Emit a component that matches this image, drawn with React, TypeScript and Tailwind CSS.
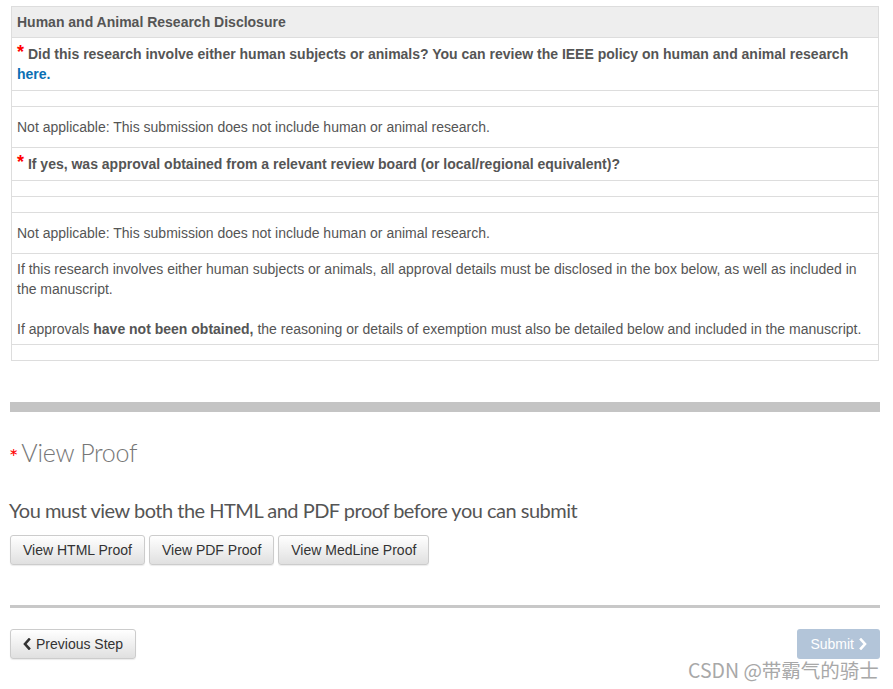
const body = "font-['Liberation_Sans',Arial,sans-serif]";

function Star({ className = '' }: { className?: string }) {
  return <span className={`text-[#ff0000] ${className}`}>*</span>;
}

function Chevron({ dir }: { dir: 'left' | 'right' }) {
  return (
    <svg viewBox="0 0 8 12" className="w-[8px] h-[12px]" fill="none" stroke="currentColor" strokeWidth="2.6" strokeLinecap="square">
      {dir === 'left' ? <polyline points="6,1.5 2,6 6,10.5" /> : <polyline points="2,1.5 6,6 2,10.5" />}
    </svg>
  );
}

function EmptyRow() {
  return <div className="h-[16px] border-t border-[#dddddd]" />;
}

function NotApplicable() {
  return (
    <div className="border-t border-[#dddddd] px-[5px] py-[10px] leading-[20px]">
      Not applicable: This submission does not include human or animal research.
    </div>
  );
}

function GreyButton({ children }: { children: React.ReactNode }) {
  return (
    <button
      className={`${body} h-[30px] px-[12px] rounded-[3px] border border-[#cccccc] bg-gradient-to-b from-[#ffffff] to-[#e0e0e0] text-[14px] text-[#333333] shadow-[0_1px_1px_rgba(0,0,0,0.08)] flex items-center gap-[5px]`}
    >
      {children}
    </button>
  );
}

export default function App() {
  return (
    <div className="relative w-[893px] h-[689px] bg-white overflow-hidden">
      <div className="pt-[6px] pl-[11px] pr-[14px]">
        <div className={`${body} border border-[#dddddd] text-[14px] text-[#555555]`}>
          <div className="h-[30px] bg-[#eeeeee] px-[5px] flex items-center font-bold">
            Human and Animal Research Disclosure
          </div>
          <div className="border-t border-[#dddddd] px-[5px] py-[6px] leading-[20px] font-bold">
            <Star className="text-[18px] leading-[0] relative top-[-1px]" /> Did this research involve either human subjects or animals? You can review the IEEE policy on human and animal research{' '}
            <a className="text-[#0a6fb3]">here.</a>
          </div>
          <EmptyRow />
          <NotApplicable />
          <div className="border-t border-[#dddddd] px-[5px] py-[6px] leading-[20px] font-bold">
            <Star className="text-[18px] leading-[0] relative top-[-1px]" /> If yes, was approval obtained from a relevant review board (or local/regional equivalent)?
          </div>
          <EmptyRow />
          <EmptyRow />
          <NotApplicable />
          <div className="border-t border-[#dddddd] px-[5px] py-[5px] leading-[20px]">
            <p className="mb-[20px]">
              If this research involves either human subjects or animals, all approval details must be disclosed in the box below, as well as included in the manuscript.
            </p>
            <p>
              If approvals <b>have not been obtained,</b> the reasoning or details of exemption must also be detailed below and included in the manuscript.
            </p>
          </div>
          <EmptyRow />
        </div>
      </div>

      <div className="mx-[10px] w-[870px]">
        <div className="mt-[41px] h-[10px] bg-[#c4c4c4]" />

        <div className="mt-[26px] flex items-center h-[30px] font-['Lato',sans-serif]">
          <span className="text-[#ff0000] text-[22px] leading-[22px] mr-[3px] mt-[8px] ml-[-1px]">*</span>
          <span className="text-[25px] font-light text-[#777777] tracking-[-0.3px]">View Proof</span>
        </div>

        <div className="mt-[29px] ml-[-1px] font-['Lato',sans-serif] text-[20px] leading-[26px] text-[#555555] tracking-[-0.5px]">
          You must view both the HTML and PDF proof before you can submit
        </div>

        <div className="mt-[12px] flex gap-[4px]">
          <GreyButton>View HTML Proof</GreyButton>
          <GreyButton>View PDF Proof</GreyButton>
          <GreyButton>View MedLine Proof</GreyButton>
        </div>

        <div className="mt-[40px] h-[3px] bg-[#c8c8c8]" />

        <div className="mt-[21px] flex justify-between">
          <GreyButton>
            <Chevron dir="left" />
            Previous Step
          </GreyButton>
          <button
            className={`${body} h-[30px] px-[13px] rounded-[3px] bg-[#b3c5d9] text-[14px] text-white flex items-center gap-[5px]`}
          >
            Submit
            <Chevron dir="right" />
          </button>
        </div>
      </div>

      <div className="absolute left-[688px] top-[658px] font-['Noto_Sans_CJK_SC',sans-serif] text-[19.5px] leading-[24px] text-[#a8a8a8] whitespace-nowrap">
        CSDN @带霸气的骑士
      </div>
    </div>
  );
}
